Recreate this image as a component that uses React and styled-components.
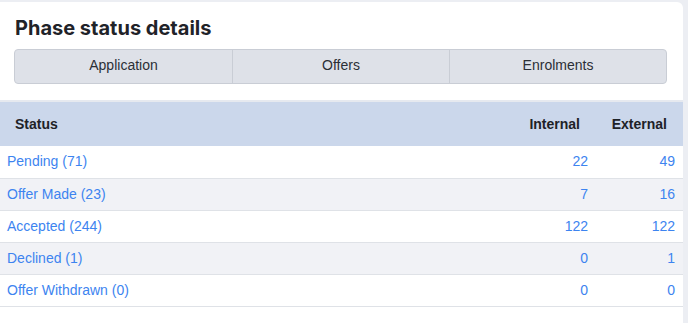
import styled, { createGlobalStyle } from "styled-components";

const GlobalStyle = createGlobalStyle`
  html, body {
    margin: 0;
    padding: 0;
    background: #eceef3;
  }
  body {
    font-family: "Liberation Sans", Arial, sans-serif;
  }
`;

const Page = styled.div`
  padding-top: 2px;
  height: 321px;
  overflow: hidden;
`;

const Card = styled.div`
  width: 683px;
  height: 330px;
  background: #ffffff;
  border-radius: 0 6px 6px 0;
  overflow: hidden;
`;

const CardHead = styled.div`
  padding: 13px 16px 16px 14px;
  border-bottom: 2px solid #e6e9ef;
`;

const Title = styled.h2`
  margin: 0 0 8px 1px;
  font-family: "Inter", "Noto Sans", sans-serif;
  font-size: 20px;
  font-weight: 700;
  color: #1f2329;
  line-height: 26px;
  letter-spacing: 0;
`;

const Tabs = styled.div`
  display: grid;
  grid-template-columns: 1fr 1fr 1fr;
  height: 33px;
  border: 1px solid #c9cdd5;
  border-radius: 4px;
  background: #dee1e8;
  overflow: hidden;
`;

const Tab = styled.button`
  border: 0;
  border-left: ${(p) => (p.first ? "0" : "1px solid #c9cdd5")};
  background: transparent;
  font-family: "Liberation Sans", Arial, sans-serif;
  font-size: 14px;
  color: #2b2f36;
  padding: 0 0 4px;
  cursor: pointer;
`;

const Table = styled.table`
  width: 100%;
  border-collapse: collapse;
  font-size: 14px;
`;

const HeadCell = styled.th`
  height: 44px;
  padding: 0 ${(p) => (p.right ? "16px" : "8px")} 1px 15px;
  background: #cbd7eb;
  text-align: ${(p) => (p.right ? "right" : "left")};
  font-weight: 700;
  color: #1e2227;
  width: ${(p) => p.w || "auto"};
  box-sizing: border-box;
`;

const Row = styled.tr`
  background: ${(p) => (p.striped ? "#f1f2f6" : "#ffffff")};
  border-bottom: 1px solid #dfe2e7;
`;

const Cell = styled.td`
  height: 32px;
  padding: 0 8px 1px 7px;
  box-sizing: border-box;
  text-align: ${(p) => (p.right ? "right" : "left")};
  color: #3d84f0;
`;

const rows = [
  { status: "Pending", total: 71, internal: 22, external: 49 },
  { status: "Offer Made", total: 23, internal: 7, external: 16 },
  { status: "Accepted", total: 244, internal: 122, external: 122 },
  { status: "Declined", total: 1, internal: 0, external: 1 },
  { status: "Offer Withdrawn", total: 0, internal: 0, external: 0 },
];

const App = () => {
  return (
    <>
      <GlobalStyle />
      <Page>
        <Card>
          <CardHead>
            <Title>Phase status details</Title>
            <Tabs>
              <Tab first>Application</Tab>
              <Tab>Offers</Tab>
              <Tab>Enrolments</Tab>
            </Tabs>
          </CardHead>
          <Table>
            <thead>
              <tr>
                <HeadCell>Status</HeadCell>
                <HeadCell right w="100px">Internal</HeadCell>
                <HeadCell right w="87px">External</HeadCell>
              </tr>
            </thead>
            <tbody>
              {rows.map((item, key) => {
                return (
                  <Row key={key} striped={key % 2 === 1}>
                    <Cell>
                      {item.status} ({item.total})
                    </Cell>
                    <Cell right>{item.internal}</Cell>
                    <Cell right>{item.external}</Cell>
                  </Row>
                );
              })}
            </tbody>
          </Table>
        </Card>
      </Page>
    </>
  );
};

export default App;
